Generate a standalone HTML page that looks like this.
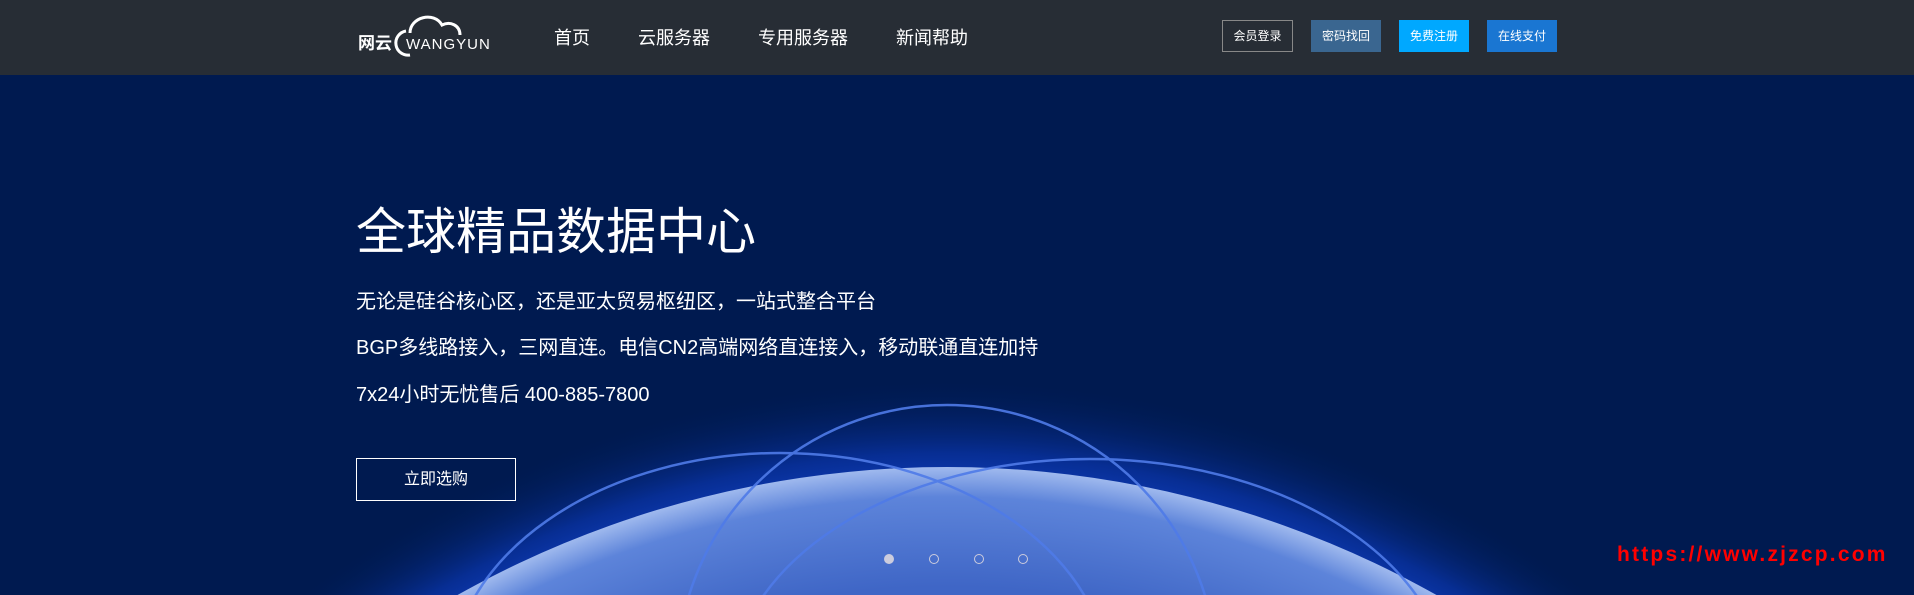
<!DOCTYPE html>
<html><head><meta charset="utf-8">
<style>
*{margin:0;padding:0;box-sizing:border-box}
html,body{width:1914px;height:595px;overflow:hidden}
body{background:#001a50;font-family:"Liberation Sans","Noto Sans CJK SC",sans-serif;color:#fff;position:relative}
.hd{position:absolute;left:0;top:0;width:1914px;height:75px;background:#272d35;z-index:3}
.nav{position:absolute;top:24px;font-size:18px;color:#fff}
.btn{position:absolute;top:20px;height:32px;width:71px;font-size:12px;line-height:32px;text-align:center;color:#fff}
.hero{position:absolute;left:0;top:75px;width:1914px;height:520px;overflow:hidden;background:#001a50}
.t{position:absolute;left:356px;white-space:nowrap}
.dot{position:absolute;top:554px;width:10px;height:10px;border-radius:50%;border:1px solid #ccd;}
</style></head><body>
<div class="hero">
<svg width="1914" height="520" style="position:absolute;left:0;top:0;display:block">
<defs>
<radialGradient id="glow" cx="947" cy="1392" r="1090" gradientUnits="userSpaceOnUse">
<stop offset="0.88" stop-color="#1546d0" stop-opacity="1"/>
<stop offset="0.93" stop-color="#0a36b0" stop-opacity="0.7"/>
<stop offset="1" stop-color="#001a50" stop-opacity="0"/>
</radialGradient>
<radialGradient id="earth" cx="947" cy="1392" r="1000" gradientUnits="userSpaceOnUse">
<stop offset="0.88" stop-color="#3f66c6"/>
<stop offset="0.97" stop-color="#5d84da"/>
<stop offset="1" stop-color="#9fb9ee"/>
</radialGradient>
</defs>
<circle cx="947" cy="1392" r="1090" fill="url(#glow)"/>
<circle cx="947" cy="1392" r="1000" fill="url(#earth)"/>
<g fill="none" stroke="#4f7be8" stroke-width="2.5" opacity="0.9">
<ellipse cx="947" cy="600" rx="270" ry="270"/>
<ellipse cx="780" cy="610" rx="330" ry="232"/>
<ellipse cx="1090" cy="620" rx="360" ry="236"/>
</g>
</svg>
<div class="t" style="top:127px;font-size:50px;line-height:60px">全球精品数据中心</div>
<div class="t" style="top:212px;font-size:20px;line-height:30px">无论是硅谷核心区，还是亚太贸易枢纽区，一站式整合平台</div>
<div class="t" style="top:258px;font-size:20px;line-height:30px">BGP多线路接入，三网直连。电信CN2高端网络直连接入，移动联通直连加持</div>
<div class="t" style="top:305px;font-size:20px;line-height:30px">7x24小时无忧售后 400-885-7800</div>
<div class="t" style="top:383px;width:160px;height:43px;border:1px solid #fff;font-size:16px;line-height:41px;text-align:center">立即选购</div>
</div>
<div class="dot" style="left:884px;background:#ccd"></div>
<div class="dot" style="left:929px"></div>
<div class="dot" style="left:974px"></div>
<div class="dot" style="left:1018px"></div>
<div style="position:absolute;left:1617px;top:543px;font-family:'Liberation Sans',sans-serif;font-weight:bold;font-size:21px;color:#f00;letter-spacing:2.2px;white-space:nowrap">https://www.zjzcp.com</div>
<div class="hd">
<svg width="160" height="60" style="position:absolute;left:350px;top:5px">
<text x="8" y="44" font-size="17" font-weight="bold" fill="#fff" font-family="Noto Sans CJK SC,sans-serif">网云</text>
<path d="M56 26 A8 8 0 0 0 60 50" stroke="#fff" stroke-width="3" fill="none"/>
<path d="M60 28 C60 12 84 6 92 20 C100 16 110 20 110 30" stroke="#fff" stroke-width="3" fill="none"/>
<text x="56" y="44" font-size="15" fill="#fff" font-family="Liberation Sans,sans-serif" letter-spacing="1">WANGYUN</text>
</svg>
<div class="nav" style="left:554px">首页</div>
<div class="nav" style="left:638px">云服务器</div>
<div class="nav" style="left:758px">专用服务器</div>
<div class="nav" style="left:896px">新闻帮助</div>
<div class="btn" style="left:1222px;border:1px solid #888;line-height:30px">会员登录</div>
<div class="btn" style="left:1311px;background:#3a6690;width:70px">密码找回</div>
<div class="btn" style="left:1399px;background:#00a8ff;width:70px">免费注册</div>
<div class="btn" style="left:1487px;background:#1a76d2;width:70px">在线支付</div>
</div>
</body></html>
